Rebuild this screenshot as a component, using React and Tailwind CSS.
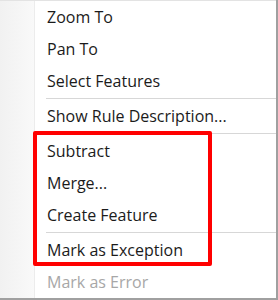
const items = [
  { label: 'Zoom To' },
  { label: 'Pan To' },
  { label: 'Select Features' },
  { sep: true },
  { label: 'Show Rule Description...' },
  { sep: true },
  { label: 'Subtract' },
  { label: 'Merge...' },
  { label: 'Create Feature' },
  { sep: true },
  { label: 'Mark as Exception' },
  { label: 'Mark as Error', disabled: true },
]

export default function App() {
  return (
    <div className="relative w-[278px] h-[300px] bg-white overflow-hidden" style={{ fontFamily: '"Open Sans", "Noto Sans", sans-serif' }}>
      <div className="flex h-[298px] w-[276px] border-t border-[#e3e3e3]">
        <div className="w-[35px] shrink-0 bg-gradient-to-r from-[#f1f1f1] to-[#f9f9f9] border-r border-[#ececec]" />
        <ul className="flex-1 flex flex-col">
          {items.map((it, i) =>
            it.sep ? (
              <li key={i} className="h-[3px] flex items-center pl-[11px]">
                <div className="h-px w-full bg-[#d7d7d7]" />
              </li>
            ) : (
              <li
                key={i}
                className={`h-[32px] flex items-center pl-[12px] text-[16px] ${it.disabled ? 'text-[#a7a7a7]' : 'text-[#1b1b1b]'}`}
              >
                {it.label}
              </li>
            )
          )}
        </ul>
      </div>
      <div className="absolute right-0 top-0 h-[300px] w-[2px] bg-[#a0a0a0]" />
      <div className="absolute left-0 bottom-0 h-[2px] w-[278px] bg-[#a0a0a0]" />
      <div className="absolute left-[33px] top-[131px] w-[179px] h-[135px] border-4 border-[#ff0000] rounded-[2px]" />
    </div>
  )
}
